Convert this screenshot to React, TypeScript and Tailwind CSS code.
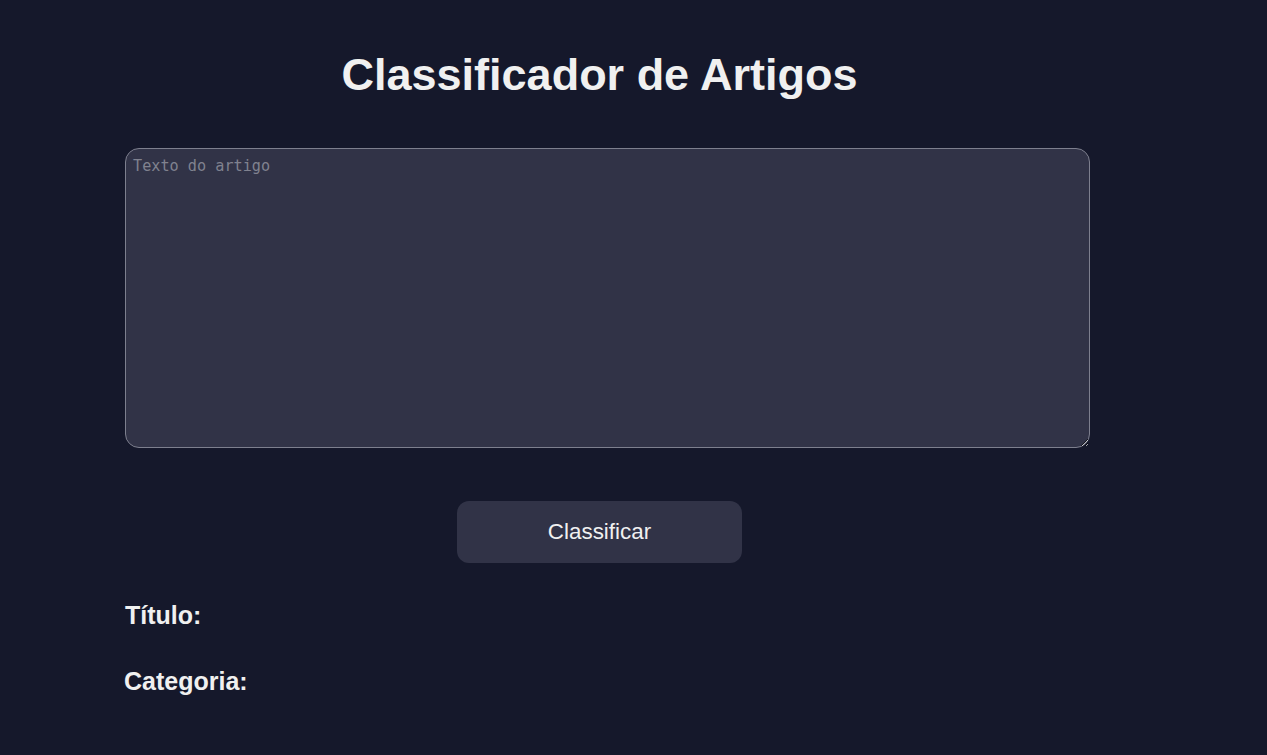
import React from "react";

export default function App() {
  return (
    <div className="min-h-[755px] w-full bg-[#15182b] text-[#f0f0f0]" style={{ fontFamily: '"Liberation Sans", Arial, sans-serif' }}>
      <div className="w-[1199px] pt-[47px]">
        <h1 className="text-center text-[45px] font-bold leading-[56px]">Classificador de Artigos</h1>
        <div className="mt-[45px] pl-[125px]">
          <textarea
            placeholder="Texto do artigo"
            className="block h-[300px] w-[965px] rounded-[14px] border border-[#7d7f8e] bg-[#313347] px-[7px] py-[6px] text-[15.2px] text-[#f0f0f0] placeholder-[#80828f] outline-none"
            style={{ fontFamily: '"DejaVu Sans Mono", monospace' }}
          />
        </div>
        <div className="mt-[53px] flex justify-center">
          <button className="h-[62px] w-[285px] rounded-[12px] bg-[#313347] text-[22.4px] text-[#f0f0f0]">Classificar</button>
        </div>
        <div className="pl-[125px] pt-[37px]">
          <p className="text-[25px] font-bold leading-[30px]">Título:</p>
          <p className="mt-[36px] -ml-[1px] text-[25px] font-bold leading-[30px]">Categoria:</p>
        </div>
      </div>
    </div>
  );
}
